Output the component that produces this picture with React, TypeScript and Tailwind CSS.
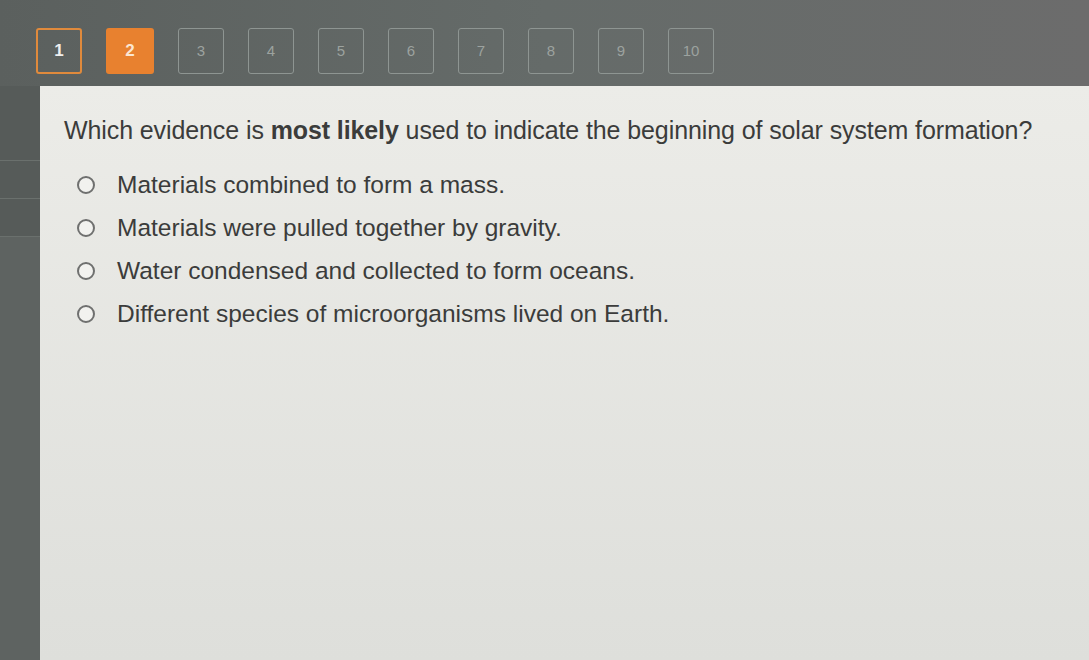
const PAGES = ['1', '2', '3', '4', '5', '6', '7', '8', '9', '10'];

const OPTIONS = [
  'Materials combined to form a mass.',
  'Materials were pulled together by gravity.',
  'Water condensed and collected to form oceans.',
  'Different species of microorganisms lived on Earth.',
];

export default function App() {
  return (
    <div className="w-[1089px] h-[660px] flex flex-col bg-[#5b605e] overflow-hidden" style={{ fontFamily: '"Liberation Sans", Arial, sans-serif' }}>
      {/* top nav */}
      <div className="h-[86px] shrink-0 flex items-start pt-[28px] pl-[36px] gap-[24px] bg-gradient-to-r from-[#5b605e] via-[#656b69] to-[#6c6c6c]">
        {PAGES.map((p, i) => (
          <div
            key={p}
            className={
              i === 0
                ? 'w-[46px] h-[46px] rounded-[3px] border-2 border-[#e08a3c] flex items-center justify-center text-[#eeeeee] text-[17px] font-bold'
                : i === 1
                ? 'w-[48px] h-[46px] rounded-[3px] bg-[#e8812f] flex items-center justify-center text-[#fbe6d2] text-[17px] font-bold'
                : 'w-[46px] h-[46px] rounded-[3px] border border-[#8e9592] flex items-center justify-center text-[#9ca29f] text-[15px]'
            }
          >
            {p}
          </div>
        ))}
      </div>

      <div className="flex flex-1">
        {/* left rail */}
        <div className="w-[40px] shrink-0 flex flex-col bg-[#565b59]">
          <div className="h-[75px] border-b border-[#6a706d]" />
          <div className="h-[38px] border-b border-[#6a706d]" />
          <div className="h-[38px] border-b border-[#6a706d]" />
          <div className="flex-1 bg-[#5e6361]" />
        </div>

        {/* question panel */}
        <div className="flex-1 bg-gradient-to-b from-[#ecece8] to-[#dedfdb] pl-[24px] pt-[28px] text-[#3b3c3b]">
          <p className="text-[25px] leading-[32px] tracking-[-0.1px]">
            Which evidence is <span className="font-bold">most likely</span> used to indicate the beginning of solar system formation?
          </p>
          <div className="mt-[24px] flex flex-col gap-[14px] pl-[13px]">
            {OPTIONS.map(o => (
              <label key={o} className="flex items-center gap-[22px] text-[24.5px] leading-[29px]">
                <span className="w-[18px] h-[18px] rounded-full border-2 border-[#6f706f] bg-[#f2f2ef] shrink-0" />
                <span>{o}</span>
              </label>
            ))}
          </div>
        </div>
      </div>
    </div>
  );
}
